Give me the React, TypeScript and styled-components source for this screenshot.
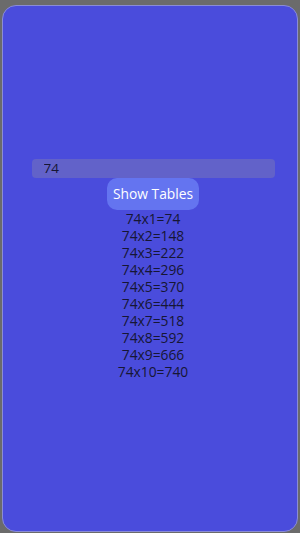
import React, { useState } from "react";
import styled, { createGlobalStyle } from "styled-components";

const Global = createGlobalStyle`
  html, body { margin: 0; padding: 0; background: #6b6b6b; }
  body { font-family: "Open Sans", "Noto Sans", sans-serif; }
  #root { width: 300px; height: 533px; }
`;

const Frame = styled.div`
  box-sizing: border-box;
  width: 300px;
  height: 533px;
  padding: 5px 2px 1px 2px;
  display: flex;
`;

const Card = styled.div`
  flex: 1;
  background: #4a4cdc;
  border: 1px solid #8a8cd6;
  border-radius: 14px;
  display: flex;
  flex-direction: column;
  align-items: center;
  justify-content: center;
  padding-left: 6px;
  padding-top: 2px;
`;

const Input = styled.input`
  box-sizing: border-box;
  width: 243px;
  height: 19px;
  border: none;
  outline: none;
  border-radius: 4px;
  background: #6262c9;
  color: #161634;
  font-family: "Open Sans", "Noto Sans", sans-serif;
  font-size: 13.5px;
  padding: 0 0 0 12px;
`;

const Button = styled.button`
  box-sizing: border-box;
  height: 32px;
  padding: 0 6px;
  border: none;
  border-radius: 10px;
  background: #6474f0;
  color: #ffffff;
  font-family: "Open Sans", "Noto Sans", sans-serif;
  font-size: 13.8px;
  cursor: pointer;
`;

const Table = styled.div`
  display: flex;
  flex-direction: column;
  align-items: center;
`;

const Line = styled.div`
  font-size: 13.8px;
  line-height: 17.1px;
  color: #161634;
`;

export default function App() {
  const [value, setValue] = useState("74");
  const n = parseInt(value, 10) || 0;
  const rows = Array.from({ length: 10 }, (_, i) => i + 1);
  return (
    <>
      <Global />
      <Frame>
        <Card>
          <Input value={value} onChange={(e) => setValue(e.target.value)} />
          <Button>Show Tables</Button>
          <Table>
            {rows.map((i) => (
              <Line key={i}>
                {n}x{i}={n * i}
              </Line>
            ))}
          </Table>
        </Card>
      </Frame>
    </>
  );
}
